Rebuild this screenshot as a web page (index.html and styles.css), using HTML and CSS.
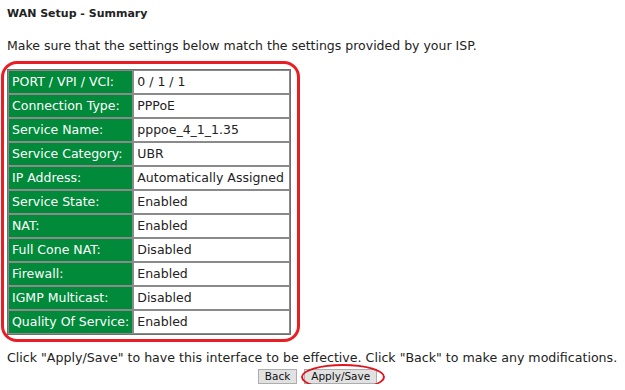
FILE: index.html
```html
<!DOCTYPE html>
<html>
<head>
<meta charset="utf-8">
<link rel="stylesheet" href="styles.css">
</head>
<body>
<div class="page">
  <div class="title">WAN Setup - Summary</div>
  <p class="intro">Make sure that the settings below match the settings provided by your ISP.</p>
  <div class="annot">
    <table class="summary">
      <tr><td class="lbl">PORT / VPI / VCI:</td><td class="val">0 / 1 / 1</td></tr>
      <tr><td class="lbl">Connection Type:</td><td class="val">PPPoE</td></tr>
      <tr><td class="lbl">Service Name:</td><td class="val">pppoe_4_1_1.35</td></tr>
      <tr><td class="lbl">Service Category:</td><td class="val">UBR</td></tr>
      <tr><td class="lbl">IP Address:</td><td class="val">Automatically Assigned</td></tr>
      <tr><td class="lbl">Service State:</td><td class="val">Enabled</td></tr>
      <tr><td class="lbl">NAT:</td><td class="val">Enabled</td></tr>
      <tr><td class="lbl">Full Cone NAT:</td><td class="val">Disabled</td></tr>
      <tr><td class="lbl">Firewall:</td><td class="val">Enabled</td></tr>
      <tr><td class="lbl">IGMP Multicast:</td><td class="val">Disabled</td></tr>
      <tr><td class="lbl">Quality Of Service:</td><td class="val">Enabled</td></tr>
    </table>
  </div>
  <p class="note">Click "Apply/Save" to have this interface to be effective. Click "Back" to make any modifications.</p>
  <div class="buttons">
    <button class="btn">Back</button>
    <span class="circled"><button class="btn">Apply/Save</button></span>
  </div>
</div>
</body>
</html>
```
FILE: styles.css
```css
html, body {
  margin: 0;
  padding: 0;
  background: #ffffff;
}
body {
  font-family: "DejaVu Sans", "Liberation Sans", sans-serif;
  font-size: 12px;
  color: #222222;
}
.page {
  padding: 6px 0 0 7px;
  width: 618px;
}
.title {
  font-weight: bold;
  font-size: 11px;
  line-height: 16px;
}
.intro {
  margin: 16px 0 0 0;
  line-height: 16px;
  font-size: 12.5px;
}
.annot {
  position: relative;
  display: inline-block;
  margin-top: 15px;
}
.annot::after {
  content: "";
  position: absolute;
  left: -6px;
  top: -8px;
  right: -9px;
  bottom: -7px;
  border: 3px solid #ea1c24;
  border-radius: 16px;
  pointer-events: none;
}
.summary {
  border-collapse: separate;
  border-spacing: 0;
  border: 1px solid #6f6f6f;
  width: 284px;
  font-size: 12.5px;
}
.summary td {
  border: 1px solid #8a8a8a;
  height: 22px;
  padding: 0 3px;
  line-height: 16px;
  white-space: nowrap;
}
.summary td.lbl {
  background: #008a3a;
  color: #ffffff;
  width: 117px;
}
.summary td.val {
  background: #ffffff;
  color: #222222;
}
.note {
  margin: 12px 0 0 0;
  line-height: 16px;
  font-size: 12.62px;
}
.buttons {
  display: flex;
  justify-content: center;
  gap: 7px;
  margin-top: 3px;
  padding-left: 3px;
}
.btn {
  font-family: "DejaVu Sans", "Liberation Sans", sans-serif;
  font-size: 10.5px;
  height: 15px;
  line-height: 11px;
  padding: 0 6px;
  background: #e1e1e1;
  border: 1px solid #adadad;
  color: #111111;
}
.circled {
  position: relative;
  display: inline-block;
}
.circled::after {
  content: "";
  position: absolute;
  left: -3px;
  top: -5px;
  right: -8px;
  bottom: -6px;
  border: 2.5px solid #e0141c;
  border-radius: 50%;
  pointer-events: none;
}
```
